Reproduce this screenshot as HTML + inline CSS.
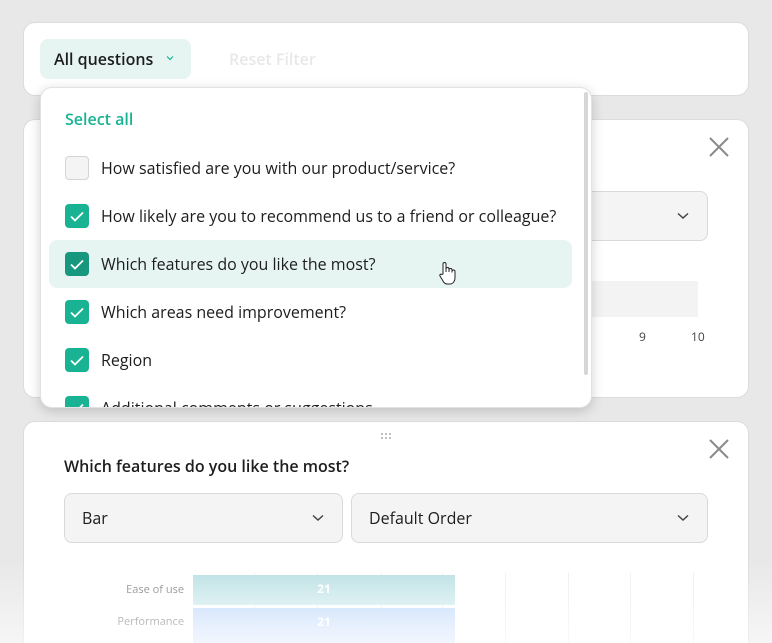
<!DOCTYPE html>
<html><head><meta charset="utf-8"><style>
*{box-sizing:border-box;margin:0;padding:0}
html{width:772px;height:643px;overflow:hidden}
body{width:772px;height:643px;overflow:hidden;background:#e8e8e8;font-family:"Open Sans","Liberation Sans",sans-serif;color:#1d1d1d;position:relative}
.card{position:absolute;left:23px;width:726px;background:#fff;border-radius:12px;border:1px solid #dcdcdc}
.abs{position:absolute}
.x{position:absolute;width:20px;height:20px}
.sel{position:absolute;background:#f4f4f4;border:1px solid #d9d9d9;border-radius:8px;font-size:16px;padding-left:17px;line-height:48px}
.chev{position:absolute;right:18px;top:20px}
.dd{position:absolute;left:40px;top:87px;width:552px;height:321px;background:#fff;border-radius:12px;box-shadow:0 3px 12px rgba(0,0,0,.18);border:1px solid #e2e2e2;overflow:hidden}
.row{position:absolute;left:24px;font-size:16px;height:24px;line-height:24px;white-space:nowrap}
.cb{position:absolute;left:0;top:0;width:24px;height:24px;border-radius:4px;background:#19b394}
.cb.off{background:#f4f4f4;border:1px solid #d4d4d4}
.row span{position:absolute;left:36px;top:0}
.lbl{position:absolute;font-size:11px;color:#808080;text-align:right;width:80px}
.gl{position:absolute;top:573px;width:1px;height:70px;background:#eeeeee}
</style></head><body>
<div class="card" style="top:22px;height:74px"></div>
<div class="abs" style="left:40px;top:39px;width:151px;height:40px;background:#e6f5f2;border-radius:8px"></div>
<div class="abs" style="left:54px;top:48px;font-size:16px;font-weight:600;line-height:22px">All questions</div>
<svg class="abs" style="left:166px;top:55px" width="8" height="6"><path d="M1 1.5L4 4.5L7 1.5" stroke="#19b394" stroke-width="1.2" fill="none"/></svg>
<div class="abs" style="left:229px;top:48px;font-size:16px;font-weight:600;color:#e8e8e8;line-height:22px">Reset Filter</div>

<div class="card" style="top:119px;height:279px"></div>
<svg class="x" style="left:709px;top:137px"><path d="M1 1L19 19M19 1L1 19" stroke="#8a8a8a" stroke-width="2"/></svg>
<div class="sel" style="left:560px;top:191px;width:148px;height:50px"><svg class="chev" width="12" height="8" style="top:20px"><path d="M1 1.5L6 6L11 1.5" stroke="#444" stroke-width="1.5" fill="none"/></svg></div>
<div class="abs" style="left:560px;top:281px;width:138px;height:36px;background:#f3f3f3"></div>
<div class="abs" style="left:639px;top:328px;font-size:12px;color:#444">9</div>
<div class="abs" style="left:691px;top:328px;font-size:12px;color:#444">10</div>

<div class="card" style="top:421px;height:240px"></div>
<svg class="abs" style="left:380px;top:432px" width="14" height="9"><g fill="#aaa"><circle cx="2" cy="2" r="1"/><circle cx="6" cy="2" r="1"/><circle cx="10" cy="2" r="1"/><circle cx="2" cy="6" r="1"/><circle cx="6" cy="6" r="1"/><circle cx="10" cy="6" r="1"/></g></svg>
<svg class="x" style="left:709px;top:439px"><path d="M1 1L19 19M19 1L1 19" stroke="#8a8a8a" stroke-width="2"/></svg>
<div class="abs" style="left:64px;top:455px;font-size:16px;font-weight:600;line-height:22px">Which features do you like the most?</div>
<div class="sel" style="left:64px;top:493px;width:279px;height:50px">Bar<svg class="chev" width="12" height="8"><path d="M1 1.5L6 6L11 1.5" stroke="#444" stroke-width="1.5" fill="none"/></svg></div>
<div class="sel" style="left:351px;top:493px;width:357px;height:50px">Default Order<svg class="chev" width="12" height="8"><path d="M1 1.5L6 6L11 1.5" stroke="#444" stroke-width="1.5" fill="none"/></svg></div>
<div class="gl" style="left:254px"></div><div class="gl" style="left:317px"></div><div class="gl" style="left:381px"></div><div class="gl" style="left:442px"></div><div class="gl" style="left:505px"></div><div class="gl" style="left:568px"></div><div class="gl" style="left:630px"></div><div class="gl" style="left:693px"></div>
<div class="abs" style="left:193px;top:575px;width:262px;height:30px;background:linear-gradient(#b9e0e4,#cfeaed);color:#fff;font-size:12px;font-weight:700;text-align:center;line-height:28px">21</div>
<div class="abs" style="left:193px;top:608px;width:262px;height:35px;background:linear-gradient(#c3dbfb,#dde9fc);color:#fff;font-size:12px;font-weight:700;text-align:center;line-height:28px">21</div>
<div class="lbl" style="left:104px;top:582px">Ease of use</div>
<div class="lbl" style="left:104px;top:614px">Performance</div>
<div class="abs" style="left:0;top:560px;width:772px;height:83px;background:linear-gradient(rgba(255,255,255,0),rgba(255,255,255,.6))"></div>

<div class="dd">
<div class="abs" style="left:24px;top:20px;font-size:16px;font-weight:600;color:#19b394;line-height:22px">Select all</div>
<div class="abs" style="left:8px;top:152px;width:523px;height:48px;background:#e6f5f2;border-radius:8px"></div>
<div class="row" style="top:68px"><div class="cb off"></div><span>How satisfied are you with our product/service?</span></div>
<div class="row" style="top:116px"><div class="cb"><svg width="24" height="24"><path d="M6 12.5L10 16.5L18 8.5" stroke="#fff" stroke-width="1.8" fill="none"/></svg></div><span>How likely are you to recommend us to a friend or colleague?</span></div>
<div class="row" style="top:164px"><div class="cb" style="background:#17987e"><svg width="24" height="24"><path d="M6 12.5L10 16.5L18 8.5" stroke="#fff" stroke-width="1.8" fill="none"/></svg></div><span>Which features do you like the most?</span></div>
<div class="row" style="top:212px"><div class="cb"><svg width="24" height="24"><path d="M6 12.5L10 16.5L18 8.5" stroke="#fff" stroke-width="1.8" fill="none"/></svg></div><span>Which areas need improvement?</span></div>
<div class="row" style="top:260px"><div class="cb"><svg width="24" height="24"><path d="M6 12.5L10 16.5L18 8.5" stroke="#fff" stroke-width="1.8" fill="none"/></svg></div><span>Region</span></div>
<div class="row" style="top:308px"><div class="cb"><svg width="24" height="24"><path d="M6 12.5L10 16.5L18 8.5" stroke="#fff" stroke-width="1.8" fill="none"/></svg></div><span>Additional comments or suggestions</span></div>
<div class="abs" style="left:543px;top:4px;width:4px;height:283px;background:#d6d6d6;border-radius:2px"></div>
<svg class="abs" style="left:396px;top:172px" width="20" height="26"><path d="M6 14V4a1.5 1.5 0 013 0v8V9a1.5 1.5 0 013 0v3-2a1.5 1.5 0 013 0v2.5-1a1.5 1.5 0 013 0V18c0 3-2 6-5 6H10c-2 0-3-1-4-3l-3-5c-.7-1.2.8-2.5 2-1.5L6 14z" fill="#fff" stroke="#222" stroke-width="1"/></svg>
</div>
</body></html>
